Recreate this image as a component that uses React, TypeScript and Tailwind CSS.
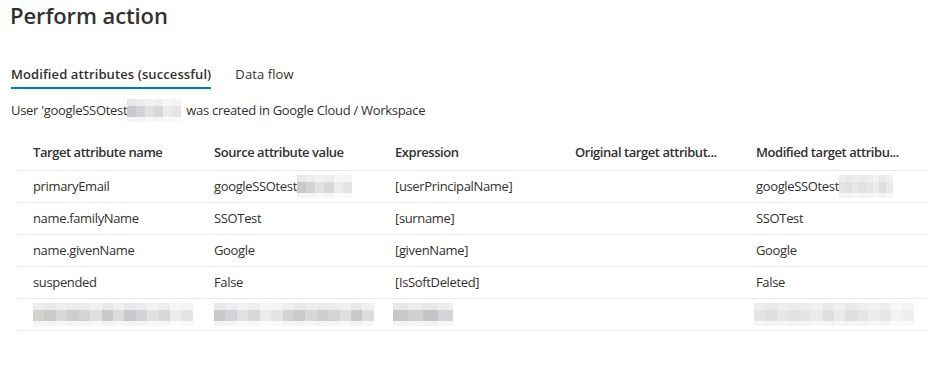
import React from "react";

const Blur = ({ w, cols, light }: { w: number; cols: string[]; light?: boolean }) => (
  <span className="inline-flex flex-col align-middle" style={{ width: w }}>
    <span className="flex h-[7px] opacity-40">
      {cols.map((c, i) => (
        <span key={i} className="flex-1" style={{ background: c }} />
      ))}
    </span>
    <span className={`flex h-[11px] ${light ? "opacity-60" : ""}`}>
      {cols.map((c, i) => (
        <span key={i} className="flex-1" style={{ background: c }} />
      ))}
    </span>
    <span className="flex h-[5px] opacity-20">
      {cols.map((c, i) => (
        <span key={i} className="flex-1" style={{ background: c }} />
      ))}
    </span>
  </span>
);

const g1 = ["#c9c9cb", "#d4d2d6", "#e2e0e0", "#d8d6d8", "#ececee", "#e6e4e6"];
const g2 = ["#d6d2d0", "#c8cacc", "#d9d7d9", "#cfcdd0", "#d6d3d3", "#e0dede", "#c9c9cc", "#dedcdc"];

const rows = [
  ["primaryEmail", "src", "[userPrincipalName]", "", "mod"],
  ["name.familyName", "SSOTest", "[surname]", "", "SSOTest"],
  ["name.givenName", "Google", "[givenName]", "", "Google"],
  ["suspended", "False", "[IsSoftDeleted]", "", "False"],
];

const gridCls = "grid grid-cols-[181px_181px_180px_181px_1fr]";

export default function App() {
  return (
    <div
      className="w-[931px] h-[366px] bg-white text-[#323130] overflow-hidden"
      style={{ fontFamily: '"Segoe UI", "Open Sans", sans-serif' }}
    >
      <h1 className="pl-[10px] pt-[1px] text-[22px] leading-[28px] font-semibold tracking-[-0.1px]">
        Perform action
      </h1>
      <div className="mt-[33px] pl-[11px] flex gap-[24px] text-[13px]">
        <div className="flex flex-col">
          <span className="font-semibold leading-[24px] tracking-[0.1px]">Modified attributes (successful)</span>
          <span className="h-[2px] bg-[#0078d4] mt-[1px]" />
        </div>
        <span className="leading-[24px] tracking-[0.1px]">Data flow</span>
      </div>
      <div className="pl-[11px] mt-[9px] text-[13px] leading-[24px] flex items-center tracking-[-0.3px]">
        <span>User 'googleSSOtest</span>
        <Blur w={54} cols={g1} />
        <span className="ml-[5px]">was created in Google Cloud / Workspace</span>
      </div>
      <div className="ml-[17px] mr-[3px] mt-[13px] text-[13px] tracking-[-0.35px]">
        <div className={`${gridCls} h-[36px] items-center border-b border-[#edebe9] font-semibold tracking-[-0.45px]`}>
          {["Target attribute name", "Source attribute value", "Expression", "Original target attribut...", "Modified target attribu..."].map(
            (h) => (
              <div key={h} className="pl-[16px] whitespace-nowrap overflow-hidden">
                {h}
              </div>
            )
          )}
        </div>
        {rows.map((r, i) => (
          <div key={i} className={`${gridCls} h-[32px] items-center border-b border-[#edebe9]`}>
            {r.map((c, j) => (
              <div key={j} className="pl-[16px] whitespace-nowrap flex items-center">
                {c === "src" ? (
                  <>
                    <span>googleSSOtest</span>
                    <Blur w={55} cols={g1} />
                  </>
                ) : c === "mod" ? (
                  <>
                    <span>googleSSOtest</span>
                    <Blur w={54} cols={g2} light />
                  </>
                ) : (
                  c
                )}
              </div>
            ))}
          </div>
        ))}
        <div className={`${gridCls} h-[32px] items-center border-b border-[#edebe9]`}>
          <div className="pl-[16px] flex"><Blur w={160} cols={[...g2, ...g1]} /></div>
          <div className="pl-[16px] flex"><Blur w={160} cols={[...g1, ...g2]} /></div>
          <div className="pl-[14px] flex"><Blur w={60} cols={["#c8c8ca", "#d0d0d2", "#c4c4c6", "#d2d6da"]} /></div>
          <div />
          <div className="pl-[14px] flex"><Blur w={160} cols={[...g2, ...g1]} light /></div>
        </div>
      </div>
    </div>
  );
}
